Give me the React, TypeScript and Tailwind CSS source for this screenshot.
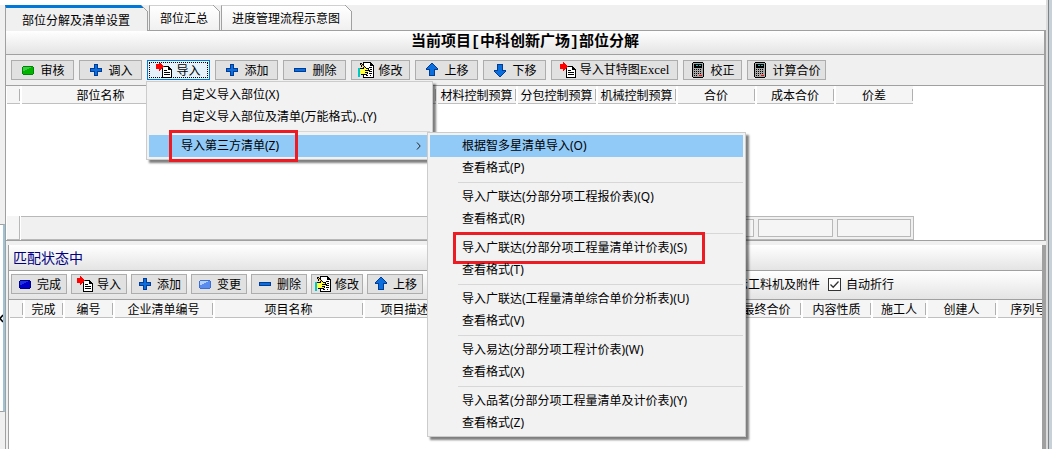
import { useState, type ReactNode } from 'react';
import clsx from 'clsx';

type IconName = 'green' | 'navy' | 'sky' | 'plus' | 'minus' | 'import' | 'edit' | 'up' | 'down' | 'calc';

interface ToolItem {
  label: ReactNode;
  icon: IconName;
  width: string;
  menu?: boolean;
}

interface MenuEntry {
  text: string;
  marked?: boolean;
}

interface Column {
  name: string;
  width: number;
  total?: boolean;
}

const TABS = ['部位分解及清单设置', '部位汇总', '进度管理流程示意图'];

const TOP_TOOLS: ToolItem[] = [
  { label: '审核', icon: 'green', width: 'w-[63px]' },
  { label: '调入', icon: 'plus', width: 'w-[63px]' },
  { label: '导入', icon: 'import', width: 'w-[63px]', menu: true },
  { label: '添加', icon: 'plus', width: 'w-[63px]' },
  { label: '删除', icon: 'minus', width: 'w-[63px]' },
  { label: '修改', icon: 'edit', width: 'w-[59px]' },
  { label: '上移', icon: 'up', width: 'w-[63px]' },
  { label: '下移', icon: 'down', width: 'w-[63px]' },
  {
    label: <>导入甘特图<span className='font-["Liberation_Serif",serif] text-[13px]'>Excel</span></>,
    icon: 'import',
    width: 'w-[127px]',
  },
  { label: '校正', icon: 'calc', width: 'w-[59px]' },
  { label: '计算合价', icon: 'calc', width: 'w-[79px]' },
];

const BOTTOM_TOOLS: ToolItem[] = [
  { label: '完成', icon: 'navy', width: 'w-[56px]' },
  { label: '导入', icon: 'import', width: 'w-[56px]' },
  { label: '添加', icon: 'plus', width: 'w-[56px]' },
  { label: '变更', icon: 'sky', width: 'w-[56px]' },
  { label: '删除', icon: 'minus', width: 'w-[56px]' },
  { label: '修改', icon: 'edit', width: 'w-[52px]' },
  { label: '上移', icon: 'up', width: 'w-[56px]' },
];

const TOP_COLUMNS: Column[] = [
  { name: '', width: 15 },
  { name: '部位名称', width: 160 },
  { name: '', width: 256 },
  { name: '材料控制预算', width: 80 },
  { name: '分包控制预算', width: 80 },
  { name: '机械控制预算', width: 80 },
  { name: '合价', width: 79, total: true },
  { name: '成本合价', width: 79, total: true },
  { name: '价差', width: 79, total: true },
];

const BOTTOM_COLUMNS: Column[] = [
  { name: '', width: 15 },
  { name: '完成', width: 40 },
  { name: '编号', width: 50 },
  { name: '企业清单编号', width: 100 },
  { name: '项目名称', width: 150 },
  { name: '项目描述', width: 82 },
  { name: '', width: 286 },
  { name: '最终合价', width: 70 },
  { name: '内容性质', width: 70 },
  { name: '施工人', width: 55 },
  { name: '创建人', width: 70 },
  { name: '序列号', width: 64 },
];

const SUBMENU: MenuEntry[][] = [
  [{ text: '根据智多星清单导入(O)' }, { text: '查看格式(P)' }],
  [{ text: '导入广联达(分部分项工程报价表)(Q)' }, { text: '查看格式(R)' }],
  [{ text: '导入广联达(分部分项工程量清单计价表)(S)', marked: true }, { text: '查看格式(T)' }],
  [{ text: '导入广联达(工程量清单综合单价分析表)(U)' }, { text: '查看格式(V)' }],
  [{ text: '导入易达(分部分项工程计价表)(W)' }, { text: '查看格式(X)' }],
  [{ text: '导入品茗(分部分项工程量清单及计价表)(Y)' }, { text: '查看格式(Z)' }],
];

function Block({ fill, light, edge }: { fill: string; light: string; edge: string }) {
  return (
    <>
      <path d="M3 4h10v1h1v7h-1v1H3v-1H2V5h1z" fill={edge} />
      <path d="M3 5h10v7H3z" fill={fill} />
      <path d="M3 5h8v1H9v1H7v1H5v1H3z" fill={light} />
    </>
  );
}

function Icon({ name }: { name: IconName }) {
  return (
    <svg width="16" height="16" viewBox="0 0 16 16" shapeRendering="crispEdges" className="shrink-0">
      {name === 'green' && <Block fill="#00b400" light="#3ccd46" edge="#00820a" />}
      {name === 'navy' && <Block fill="#0000c8" light="#1e32e6" edge="#000082" />}
      {name === 'sky' && <Block fill="#5a8cf0" light="#b4d2ff" edge="#3c6ed2" />}
      {name === 'plus' && (
        <>
          <path d="M6 2h4v4h4v4h-4v4H6v-4H2V6h4z" fill="#003c96" />
          <path d="M7 3h2v4h4v2H9v4H7V9H3V7h4z" fill="#0a6edc" />
        </>
      )}
      {name === 'minus' && (
        <>
          <path d="M2 6h12v4H2z" fill="#003c96" />
          <path d="M3 7h10v2H3z" fill="#0a6edc" />
        </>
      )}
      {(name === 'up' || name === 'down') && (
        <g transform={name === 'down' ? 'rotate(180 8 8)' : undefined}>
          <path d="M7 1h2v1h1v1h1v1h1v1h1v1h1v2h-3v6H5V8H2V6h1V5h1V4h1V3h1V2h1z" fill="#003c96" />
          <path d="M7 2h2v1h1v1h1v1h1v1h1v1h-3v6H6V7H3V6h1V5h1V4h1V3h1z" fill="#0a6edc" />
        </g>
      )}
      {name === 'import' && (
        <>
          <path d="M6 4h7v1h1v1h1v1h1v9H6z" fill="#000" />
          <path d="M7 5h5v3h3v7H7z" fill="#fff" />
          <path d="M12 5h1v1h1v1h-2zM8 8h3v1H8zM8 10h6v1H8zM8 12h6v1H8z" fill="#000" />
          <path d="M0 2h3V0h1v1h1v1h1v1h1v1h1v1H7v1H6v1H5v1H4v1H3V7H0z" fill="#f00" />
        </>
      )}
      {name === 'edit' && (
        <>
          <path d="M5 0h8v1h1v1h1v1h1v13H5z" fill="#000" />
          <path d="M6 1h6v3h3v11H6z" fill="#fff" />
          <path d="M13 3h1v1h-1zM11 5h3v1h-3zM12 7h2v1h-2zM12 9h2v1h-2zM11 11h3v1h-3zM8 13h2v1H8zM12 13h1v1h-1z" fill="#000" />
          <path d="M0 6h2v9H0z" fill="#00c8c8" />
          <path d="M2 6h3V5h3v1h3v2h1v2h-2v2H9v1H3v-1H2z" fill="#000" />
          <path d="M2 7h4V6h2v1h2v1H7v1h4v1H7v1h2v1H2z" fill="#ffff3c" />
          <path d="M2 1h2v1h1v1h1v1h1v1h1v1h1v1H8V6H7V5H6V4H5V3H4v2H3V3H2z" fill="#000" />
          <path d="M3 2h1v1h1v1h1v1h1v1H6V5H5V4H4V3H3z" fill="#ffc800" />
        </>
      )}
      {name === 'calc' && (
        <>
          <path d="M3 0h10v1h1v14h-1v1H3v-1H2V1h1z" fill="#000" />
          <path d="M3 1h10v14H3z" fill="#a8a8a8" />
          <path d="M4 2h8v4H4z" fill="#000" />
          <path d="M6 3h2v1H6zM9 3h2v1H9z" fill="#00c8c8" />
          <path d="M4 7h1v1H4zM6 7h1v1H6zM8 7h1v1H8zM10 7h1v1h-1zM4 9h1v1H4zM6 9h1v1H6zM8 9h1v1H8zM10 9h1v1h-1zM4 11h1v1H4zM6 11h1v1H6zM8 11h1v1H8zM10 11h1v1h-1zM4 13h1v1H4zM6 13h1v1H6z" fill="#000" />
          <path d="M9 13h3v1H9z" fill="#f00" />
        </>
      )}
    </svg>
  );
}

function ToolButton({ item, active }: { item: ToolItem; active?: boolean }) {
  return (
    <button
      className={clsx(
        'relative flex h-5 shrink-0 items-center justify-center gap-1 border whitespace-nowrap',
        item.width,
        active ? 'border-[#0078d7] bg-[#e5f1fb]' : 'border-[#adadad] bg-[#e1e1e1]',
      )}
    >
      <Icon name={item.icon} />
      <span>{item.label}</span>
      {active && <span className="absolute inset-px border border-dotted border-black" />}
    </button>
  );
}

function MenuRow({ entry, selected, mark, children }: {
  entry: MenuEntry;
  selected?: boolean;
  mark?: string;
  children?: ReactNode;
}) {
  return (
    <li className={clsx('relative', selected && 'bg-[#91c9f7]')}>
      <button className="flex h-[22px] w-full items-center justify-between pr-2 pl-8 text-left whitespace-nowrap">
        {entry.text}
        {children && (
          <svg width="5" height="8" viewBox="0 0 5 8" fill="none" stroke="#222" className="mr-px">
            <path d="M1 .5 4.2 4 1 7.5" />
          </svg>
        )}
      </button>
      {mark && <span className={clsx('pointer-events-none absolute -top-[5px] h-8 border-3 border-[#ed1c24]', mark)} />}
      {children}
    </li>
  );
}

const menuBox =
  'absolute border border-[#ccc] bg-[#f2f2f2] p-[2px] shadow-[3px_3px_2px_rgba(0,0,0,0.5)] font-["Noto_Sans","Noto_Sans_CJK_SC",sans-serif]';

function ImportMenu() {
  return (
    <ul className={clsx(menuBox, '-left-px top-[21px] z-10 w-[287px]')}>
      <MenuRow entry={{ text: '自定义导入部位(X)' }} />
      <MenuRow entry={{ text: '自定义导入部位及清单(万能格式)..(Y)' }} />
      <li className="my-[3px] ml-7 h-px bg-[#d7d7d7]" />
      <MenuRow entry={{ text: '导入第三方清单(Z)' }} selected mark="left-5 w-[129px]">
        <ul className={clsx(menuBox, '-top-[3px] left-[278px] w-[319px]')}>
          {SUBMENU.map((group, g) => (
            <li key={g}>
              {g > 0 && <div className="my-[3px] ml-7 h-px bg-[#d7d7d7]" />}
              <ul>
                {group.map((entry, i) => (
                  <MenuRow
                    key={entry.text}
                    entry={entry}
                    selected={g === 0 && i === 0}
                    mark={entry.marked ? 'left-[23px] w-[252px]' : undefined}
                  />
                ))}
              </ul>
            </li>
          ))}
        </ul>
      </MenuRow>
    </ul>
  );
}

function Grid({ columns, bodyHeight, footer }: { columns: Column[]; bodyHeight?: string; footer?: boolean }) {
  const total = columns.reduce((sum, c) => sum + c.width, 0);
  return (
    <div className="overflow-hidden bg-white">
      <table className="table-fixed border-collapse" style={{ width: total }}>
        <colgroup>
          {columns.map((c, i) => <col key={i} style={{ width: c.width }} />)}
        </colgroup>
        <thead>
          <tr>
            {columns.map((c, i) => (
              <th key={i} className="p-0 font-normal">
                <div className="mr-px ml-px flex h-[18px] items-center border-b border-[#c0c0c0] bg-[#f5f5f5] whitespace-nowrap">
                  <span className="flex-1 text-center">{c.name}</span>
                  <span className="h-3 w-px bg-[#b0b0b0]" />
                </div>
              </th>
            ))}
          </tr>
        </thead>
        {footer && (
          <>
            <tbody>
              <tr><td colSpan={columns.length} className={clsx('p-0', bodyHeight)} /></tr>
            </tbody>
            <tfoot>
              <tr>
                {columns.map((c, i) => (
                  <td key={i} className="p-0">
                    {i === 0 ? (
                      <div className="mx-px h-6 border-r border-b border-[#b8b8b8] bg-[#f5f5f5]" />
                    ) : (
                      <div className={clsx('h-6 border-y border-[#b8b8b8] bg-[#f0f0f0] p-[2px]', i === columns.length - 1 && 'border-r')}>
                        {c.total && <div className="h-full border border-[#b8b8b8] bg-[#f5f5f5]" />}
                      </div>
                    )}
                  </td>
                ))}
              </tr>
            </tfoot>
          </>
        )}
      </table>
    </div>
  );
}

function Option({ label, checked, onChange }: { label: string; checked: boolean; onChange: (v: boolean) => void }) {
  return (
    <label className="flex items-center gap-[5px] whitespace-nowrap">
      <span className="relative size-[13px]">
        <input
          type="checkbox"
          checked={checked}
          onChange={e => onChange(e.target.checked)}
          className="block size-[13px] appearance-none border border-[#333] bg-white"
        />
        {checked && (
          <svg viewBox="0 0 13 13" className="pointer-events-none absolute inset-0" fill="none" stroke="#333" strokeWidth="1.3">
            <path d="M2.5 6.5 5.2 9.2 10.5 3.5" />
          </svg>
        )}
      </span>
      {label}
    </label>
  );
}

export default function App() {
  const [tab, setTab] = useState(0);
  const [showItems, setShowItems] = useState(true);
  const [wrap, setWrap] = useState(true);

  return (
    <div className='flex min-h-screen overflow-hidden bg-[#f0f0f0] text-xs text-black font-["Noto_Sans_CJK_SC",sans-serif]'>
      {/* collapsed side panel */}
      <div className="flex w-[5px] shrink-0 flex-col">
        <div className="h-[5px] bg-white" />
        <div className="h-[219px]" />
        <div className="flex h-[188px] items-center border-y border-r-2 border-y-[#a0a0a0] border-r-[#9cc3d8] bg-white">
          <svg width="3" height="9" viewBox="0 0 3 9" fill="none" stroke="#000" strokeWidth="1.5">
            <path d="M3 1 0 4.5 3 8" />
          </svg>
        </div>
      </div>

      <div className="flex min-w-0 flex-1 flex-col">
        <div className="h-[5px] bg-white" />
        <div className="flex h-[25px] gap-px">
          {TABS.map((name, i) => (
            <button
              key={name}
              onClick={() => setTab(i)}
              className={clsx(
                'relative border-x border-[#a0a0a0] whitespace-nowrap',
                i === tab
                  ? 'z-1 -mb-px border-t-3 border-t-[#0078d7] bg-[#f0f0f0] pr-[17px] pl-4'
                  : 'border-t border-t-[#d0d0d0] bg-linear-to-b from-white to-[#f0f0f0] pr-[11px] pl-[10px]',
              )}
            >
              {name}
              <svg width="7" height="7" viewBox="0 0 7 7" className={clsx('absolute -right-px', i === tab ? '-top-[3px]' : '-top-px')}>
                <path d="M0 0h7v7z" fill="#f0f0f0" />
                <path d="M0 0 7 7" stroke="#a0a0a0" />
              </svg>
            </button>
          ))}
        </div>

        <div className="flex flex-1 flex-col border-l border-[#a0a0a0]">
          <section className="border-y border-r-2 border-[#a0a0a0]">
            <h1 className='flex h-6 items-center justify-center border-b border-[#a0a0a0] bg-linear-to-b from-white to-[#e4e4e4] text-[15px] font-bold font-["Liberation_Mono","Noto_Sans_CJK_SC",monospace]'>
              当前项目[中科创新广场]部位分解
            </h1>
            <div className="flex h-[31px] items-center gap-[5px] border-b border-[#a0a0a0] pl-[5px]">
              {TOP_TOOLS.map((item, i) => (
                <div key={i} className="relative">
                  <ToolButton item={item} active={item.menu} />
                  {item.menu && <ImportMenu />}
                </div>
              ))}
            </div>
            <Grid columns={TOP_COLUMNS} bodyHeight="h-[112px]" footer />
          </section>

          <section className="mt-1 ml-[2px] flex flex-1 flex-col border-r-4 border-l border-[#a0a0a0]">
            <h2 className="flex h-[26px] items-center border-b border-[#a0a0a0] bg-linear-to-b from-white to-[#e4e4e4] pb-[2px] pl-1 text-sm text-[#000080]">
              匹配状态中
            </h2>
            <div className="flex h-[29px] items-center gap-1 border-b border-[#a0a0a0] bg-linear-to-b from-white to-[#e4e4e4] pb-[2px] pl-[2px]">
              {BOTTOM_TOOLS.map(item => <ToolButton key={item.label as string} item={item} />)}
              <div className="ml-[279px] flex gap-2">
                <Option label="显示工料机及附件" checked={showItems} onChange={setShowItems} />
                <Option label="自动折行" checked={wrap} onChange={setWrap} />
              </div>
            </div>
            <div className="flex-1 bg-white">
              <Grid columns={BOTTOM_COLUMNS} />
            </div>
          </section>
        </div>
      </div>

      <div className="w-[6px] shrink-0 border-l-2 border-[#dcdcdc] bg-[#c8d0d8]">
        <div className="h-full w-px bg-[#7d8388]" />
      </div>
    </div>
  );
}
